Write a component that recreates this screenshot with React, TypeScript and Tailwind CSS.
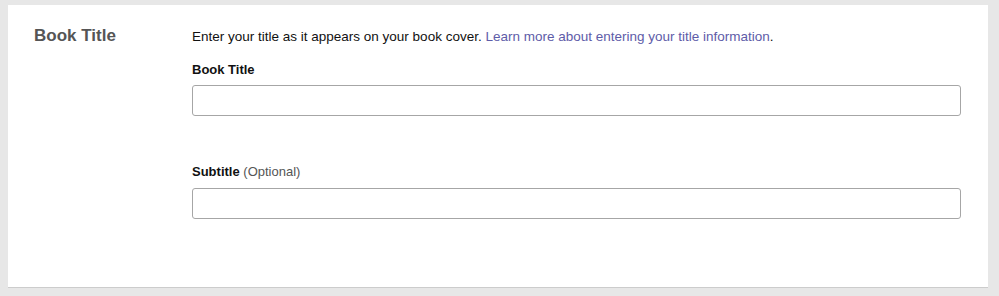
export default function App() {
  return (
    <div
      className="h-[296px] w-full bg-[#e7e7e7] pt-[5px] pl-[8px]"
      style={{ fontFamily: '"Liberation Sans", Arial, sans-serif' }}
    >
      <div className="flex h-[283px] w-[980px] border-b border-[#cccccc] bg-white">
        {/* Section heading */}
        <div className="w-[184px] shrink-0 pl-[26px] pt-[20px]">
          <h2 className="text-[17px] leading-[22px] font-bold text-[#555555]">Book Title</h2>
        </div>

        {/* Fields */}
        <div className="flex-1 pr-[27px] pt-[23px]">
          <p className="text-[13.5px] leading-[18px] text-[#111111]">
            Enter your title as it appears on your book cover.{" "}
            <a href="#" className="text-[#5e5ca8]">
              Learn more about entering your title information
            </a>
            .
          </p>

          <label className="mt-[16px] block text-[13px] font-bold leading-[16px] text-[#111111]">
            Book Title
          </label>
          <input
            type="text"
            className="mt-[7px] block h-[31px] w-full rounded-[3px] border border-[#a6a6a6] px-2 text-[13px] outline-none"
          />

          <label className="mt-[48px] block text-[13px] leading-[16px] text-[#111111]">
            <span className="font-bold">Subtitle</span>{" "}
            <span className="text-[#555555]">(Optional)</span>
          </label>
          <input
            type="text"
            className="mt-[8px] block h-[31px] w-full rounded-[3px] border border-[#a6a6a6] px-2 text-[13px] outline-none"
          />
        </div>
      </div>
    </div>
  );
}
